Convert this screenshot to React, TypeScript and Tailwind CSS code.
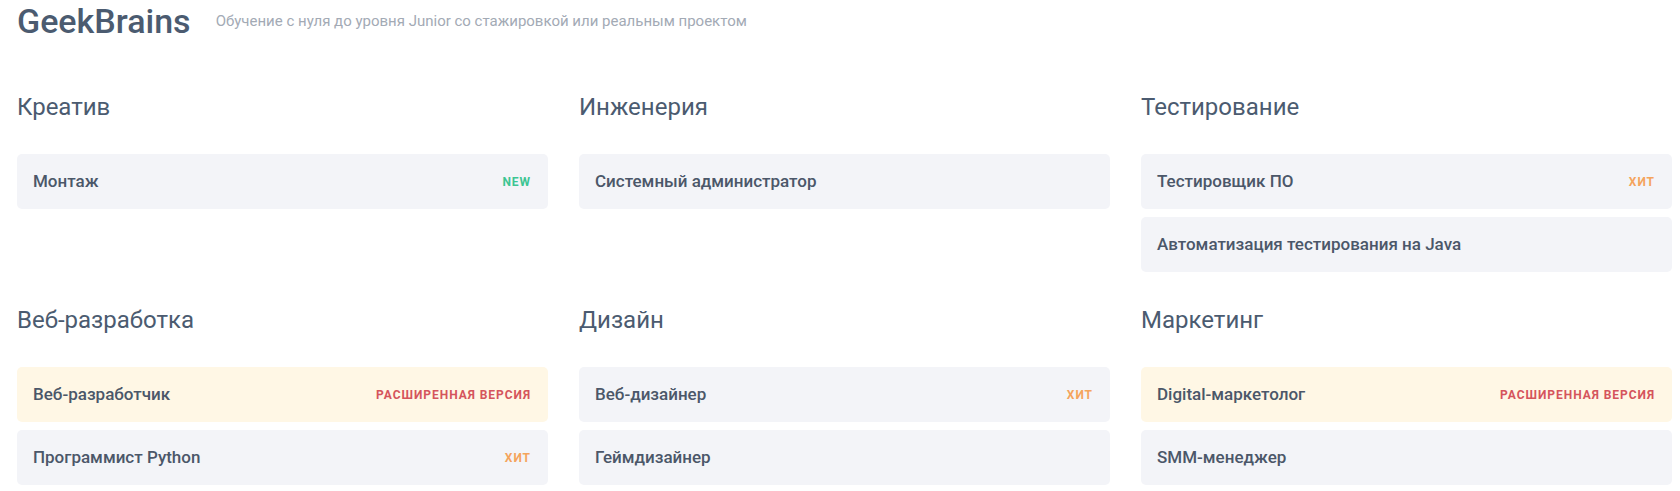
import React from "react";

type Badge = "new" | "hit" | "pro";

type Course = {
  title: string;
  badge?: Badge;
};

type Section = {
  title: string;
  courses: Course[];
};

const sections: Section[] = [
  { title: "Креатив", courses: [{ title: "Монтаж", badge: "new" }] },
  { title: "Инженерия", courses: [{ title: "Системный администратор" }] },
  {
    title: "Тестирование",
    courses: [{ title: "Тестировщик ПО", badge: "hit" }, { title: "Автоматизация тестирования на Java" }],
  },
  {
    title: "Веб-разработка",
    courses: [
      { title: "Веб-разработчик", badge: "pro" },
      { title: "Программист Python", badge: "hit" },
    ],
  },
  {
    title: "Дизайн",
    courses: [{ title: "Веб-дизайнер", badge: "hit" }, { title: "Геймдизайнер" }],
  },
  {
    title: "Маркетинг",
    courses: [{ title: "Digital-маркетолог", badge: "pro" }, { title: "SMM-менеджер" }],
  },
];

function BadgeLabel({ badge }: { badge: Badge }) {
  if (badge === "new") return <span className="text-[12px] font-bold tracking-[0.08em] text-[#3cc593]">NEW</span>;
  if (badge === "hit") return <span className="text-[12px] font-bold tracking-[0.08em] text-[#f5a45d]">ХИТ</span>;
  return <span className="text-[12px] font-bold tracking-[0.08em] text-[#d5545c]">РАСШИРЕННАЯ ВЕРСИЯ</span>;
}

function CourseCard({ course }: { course: Course }) {
  const pro = course.badge === "pro";
  return (
    <div
      className={`flex h-[55px] items-center justify-between rounded-[5px] pl-4 pr-[17px] ${
        pro ? "bg-[#fff7e5]" : "bg-[#f3f4f8]"
      }`}
    >
      <span className="text-[17px] font-medium text-[#4b5769]">{course.title}</span>
      {course.badge && <BadgeLabel badge={course.badge} />}
    </div>
  );
}

export default function App() {
  return (
    <div className="min-h-[491px] bg-white pl-[17px] pr-2 font-['Roboto',sans-serif]">
      <div className="flex items-center gap-[25px] pt-[1px]">
        <h1 className="text-[34px] font-medium leading-[40px] text-[#4b5b70]">GeekBrains</h1>
        <p className="text-[15px] text-[#a3aab5]">Обучение с нуля до уровня Junior со стажировкой или реальным проектом</p>
      </div>

      <div className="mt-[52px] grid grid-cols-3 gap-x-[31px] gap-y-[34px]">
        {sections.map((s) => (
          <div key={s.title}>
            <h2 className="text-[24px] leading-[28px] text-[#4b5b70]">{s.title}</h2>
            <div className="mt-[33px] flex flex-col gap-2">
              {s.courses.map((c) => (
                <CourseCard key={c.title} course={c} />
              ))}
            </div>
          </div>
        ))}
      </div>
    </div>
  );
}
